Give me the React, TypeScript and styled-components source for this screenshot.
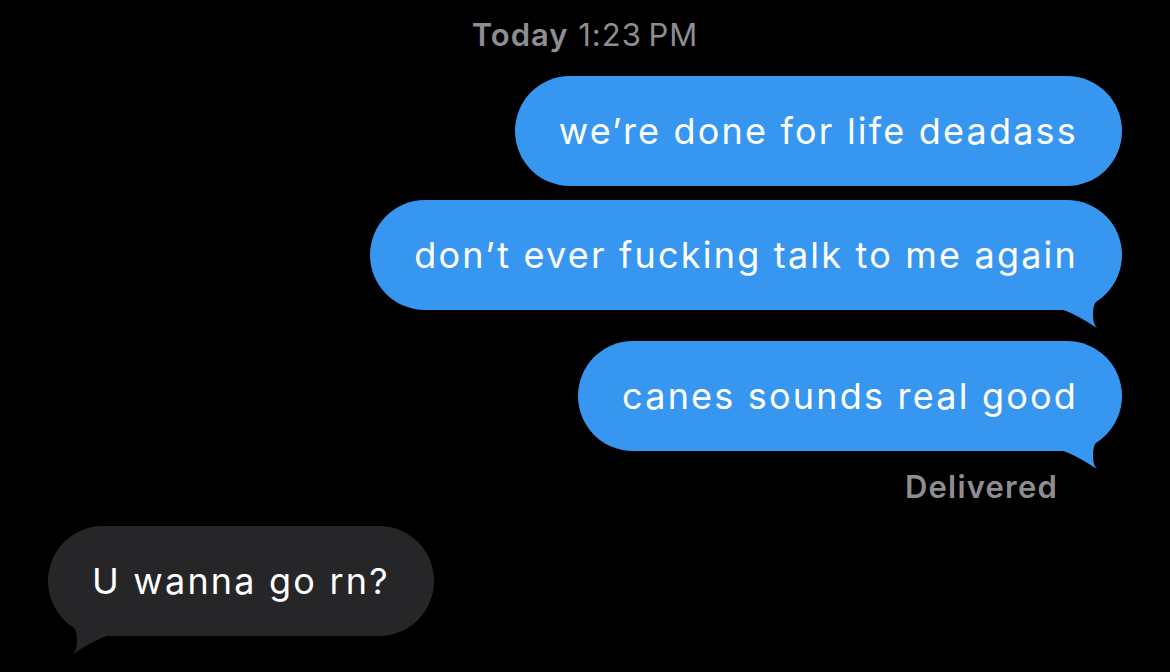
import React from "react";
import styled, { createGlobalStyle } from "styled-components";

const Global = createGlobalStyle`
  html, body { margin: 0; padding: 0; background: #000; }
  body { font-family: Inter, "Noto Sans", sans-serif; -webkit-font-smoothing: antialiased; }
`;

const Screen = styled.div`
  width: 1170px;
  height: 672px;
  background: #000;
  box-sizing: border-box;
  padding: 14px 48px 0;
  display: flex;
  flex-direction: column;
  overflow: hidden;
`;

const Stamp = styled.div`
  align-self: center;
  color: #8d8d92;
  font-size: 31px;
  line-height: 42px;
  margin-bottom: 20px;
  letter-spacing: 1px;
  b { font-weight: 600; }
`;

const Row = styled.div<{ $sent: boolean; $gap: number }>`
  display: flex;
  justify-content: ${(p) => (p.$sent ? "flex-end" : "flex-start")};
  margin-bottom: ${(p) => p.$gap}px;
`;

const Bubble = styled.div<{ $sent: boolean }>`
  position: relative;
  height: 110px;
  box-sizing: border-box;
  padding: 0 44px;
  display: flex;
  align-items: center;
  border-radius: 55px;
  background: ${(p) => (p.$sent ? "#3797f0" : "#262628")};
  color: #fff;
  font-size: 36px;
  letter-spacing: 2.2px;
  white-space: nowrap;
`;

const Text = styled.span`
  position: relative;
  z-index: 1;
`;

const TailSvg = styled.svg<{ $sent: boolean }>`
  position: absolute;
  bottom: -20px;
  width: 72px;
  height: 75px;
  z-index: 0;
  ${(p) => (p.$sent ? "right: 0;" : "left: 0; transform: scaleX(-1);")}
`;

const Status = styled.div`
  align-self: flex-end;
  margin-right: 64px;
  color: #8d8d92;
  font-size: 31px;
  font-weight: 600;
  line-height: 40px;
  margin-top: 16px;
  margin-bottom: 19px;
  letter-spacing: 1.2px;
`;

const Tail = ({ sent, color }: { sent: boolean; color: string }) => (
  <TailSvg $sent={sent} viewBox="0 0 72 75">
    <path
      d="M47 45 C44 49 43 53 43 59 C43 65 44 70 47 73 C40 69 27 59 10 54 L10 40 L47 40 Z"
      fill={color}
    />
  </TailSvg>
);

type Msg = { text: string; sent: boolean; tail: boolean };

const messages: Msg[] = [
  { text: "we\u2019re done for life deadass", sent: true, tail: false },
  { text: "don\u2019t ever fucking talk to me again", sent: true, tail: true },
  { text: "canes sounds real good", sent: true, tail: true },
];

export default function App() {
  return (
    <Screen>
      <Global />
      <Stamp>
        <b>Today</b> 1:23&#8239;PM
      </Stamp>
      {messages.map((m, i) => (
        <Row key={i} $sent={m.sent} $gap={i === messages.length - 1 ? 0 : m.tail ? 31 : 14}>
          <Bubble $sent={m.sent}>
            <Text>{m.text}</Text>
            {m.tail && <Tail sent color="#3797f0" />}
          </Bubble>
        </Row>
      ))}
      <Status>Delivered</Status>
      <Row $sent={false} $gap={0}>
        <Bubble $sent={false}>
          <Text>U wanna go rn?</Text>
          <Tail sent={false} color="#262628" />
        </Bubble>
      </Row>
    </Screen>
  );
}
